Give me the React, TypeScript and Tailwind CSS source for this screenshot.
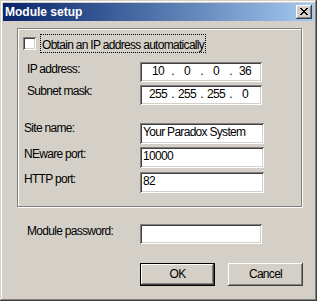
import React from 'react';

const raised =
  'shadow-[inset_-1px_-1px_0_#404040,inset_1px_1px_0_#fff,inset_-2px_-2px_0_#808080,inset_2px_2px_0_#d4d0c8]';
const sunken =
  'bg-white shadow-[inset_1px_1px_0_#808080,inset_-1px_-1px_0_#fff,inset_2px_2px_0_#404040,inset_-2px_-2px_0_#d4d0c8]';

const CloseGlyph = () => {
  const rows = ['XX....XX', '.XX..XX.', '..XXXX..', '...XX...', '..XXXX..', '.XX..XX.', 'XX....XX'];
  return (
    <svg width="8" height="7" viewBox="0 0 8 7" shapeRendering="crispEdges">
      {rows.map((r, y) =>
        r.split('').map((c, x) => (c === 'X' ? <rect key={`${x}-${y}`} x={x} y={y} width="1" height="1" fill="#000" /> : null))
      )}
    </svg>
  );
};

const IpField = ({ parts }: { parts: string[] }) => (
  <div className={`${sunken} w-[122px] h-[20px] flex pl-[6px] pt-[2px] leading-[15px]`}>
    {parts.map((p, i) => (
      <React.Fragment key={i}>
        <span className="w-[24px] text-center">{p}</span>
        {i < 3 && <span className="w-[5px] text-center">.</span>}
      </React.Fragment>
    ))}
  </div>
);

const TextField = ({ value }: { value: string }) => (
  <div className={`${sunken} w-[124px] h-[21px] pl-[3px] pt-[2px] leading-[15px] whitespace-nowrap`}>{value}</div>
);

export default function App() {
  return (
    <div
      className="w-[317px] h-[301px] bg-[#d4d0c8] p-[3px] text-[12px] tracking-[-0.7px] text-black shadow-[inset_-1px_-1px_0_#404040,inset_1px_1px_0_#d4d0c8,inset_-2px_-2px_0_#808080,inset_2px_2px_0_#fff]"
      style={{ fontFamily: "'Liberation Sans', Arial, sans-serif" }}
    >
      <div className="h-[18px] flex items-center justify-between bg-linear-to-r from-[#0a246a] to-[#a6caf0]">
        <span className="pl-[2px] text-white font-bold text-[12px] tracking-normal leading-[18px]">Module setup</span>
        <div className={`${raised} bg-[#d4d0c8] w-[16px] h-[14px] mr-[2px] flex items-start pl-[4px] pt-[3px]`}>
          <CloseGlyph />
        </div>
      </div>

      <div className="ml-[14px] mt-[7px] w-[285px] h-[179px] border border-[#808080] shadow-[inset_1px_1px_0_#fff,1px_1px_0_#fff] flex flex-col">
        <div className="flex items-center mt-[5px] ml-[5px] h-[19px]">
          <div className={`${sunken} w-[13px] h-[13px]`} />
          <span className="ml-[4px] h-[19px] px-[1px] pt-[3px] border border-dotted border-black leading-[14px] whitespace-nowrap">
            Obtain an IP address automatically
          </span>
        </div>

        <div className="flex mt-[9px]">
          <span className="w-[122px] pl-[9px] leading-[15px]">IP address:</span>
          <IpField parts={['10', '0', '0', '36']} />
        </div>
        <div className="flex items-start mt-[3px]">
          <span className="w-[122px] pl-[9px] -mt-[1px] leading-[15px]">Subnet mask:</span>
          <IpField parts={['255', '255', '255', '0']} />
        </div>

        <div className="flex items-start mt-[18px]">
          <span className="w-[122px] pl-[6px] -mt-[2px] leading-[15px]">Site name:</span>
          <TextField value="Your Paradox System" />
        </div>
        <div className="flex items-start mt-[3px]">
          <span className="w-[122px] pl-[6px] leading-[15px]">NEware port:</span>
          <TextField value="10000" />
        </div>
        <div className="flex items-start mt-[4px]">
          <span className="w-[122px] pl-[6px] leading-[15px]">HTTP port:</span>
          <TextField value="82" />
        </div>
      </div>

      <div className="flex items-start mt-[17px]">
        <span className="w-[137px] pl-[24px] leading-[15px]">Module password:</span>
        <div className={`${sunken} w-[122px] h-[20px]`} />
      </div>

      <div className="flex mt-[19px] pl-[137px] gap-[13px]">
        <button className="w-[75px] h-[23px] border border-black bg-[#d4d0c8] shadow-[inset_-1px_-1px_0_#404040,inset_1px_1px_0_#fff,inset_-2px_-2px_0_#808080] leading-[15px]">
          OK
        </button>
        <button className={`${raised} w-[75px] h-[23px] bg-[#d4d0c8] leading-[15px]`}>Cancel</button>
      </div>
    </div>
  );
}
